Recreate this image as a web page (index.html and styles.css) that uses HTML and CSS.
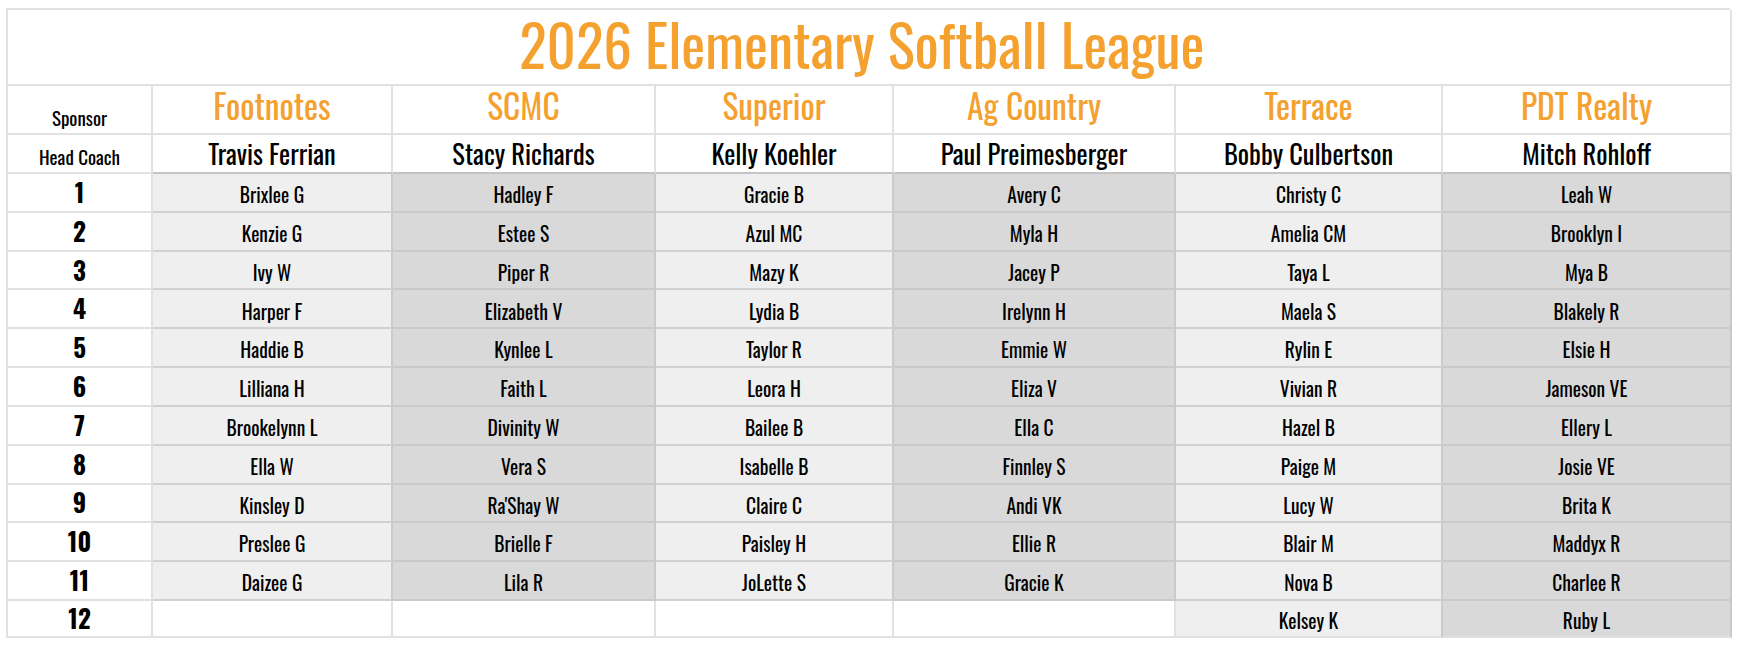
FILE: index.html
```html
<!DOCTYPE html>
<html lang="en">
<head>
<meta charset="utf-8">
<title>2026 Elementary Softball League</title>
<link rel="stylesheet" href="styles.css">
</head>
<body>
<div class="sheet">
  <div class="title"><span>2026 Elementary Softball League</span></div>

  <div class="label sponsor-label"><span>Sponsor</span></div>
  <div class="team"><span>Footnotes</span></div>
  <div class="team"><span>SCMC</span></div>
  <div class="team"><span>Superior</span></div>
  <div class="team"><span>Ag Country</span></div>
  <div class="team"><span>Terrace</span></div>
  <div class="team"><span>PDT Realty</span></div>

  <div class="label coach-label"><span>Head Coach</span></div>
  <div class="coach"><span>Travis Ferrian</span></div>
  <div class="coach"><span>Stacy Richards</span></div>
  <div class="coach"><span>Kelly Koehler</span></div>
  <div class="coach"><span>Paul Preimesberger</span></div>
  <div class="coach"><span>Bobby Culbertson</span></div>
  <div class="coach"><span>Mitch Rohloff</span></div>

  <div class="num"><span>1</span></div>
  <div class="cell light"><span>Brixlee G</span></div>
  <div class="cell dark"><span>Hadley F</span></div>
  <div class="cell light"><span>Gracie B</span></div>
  <div class="cell dark"><span>Avery C</span></div>
  <div class="cell light"><span>Christy C</span></div>
  <div class="cell dark"><span>Leah W</span></div>

  <div class="num"><span>2</span></div>
  <div class="cell light"><span>Kenzie G</span></div>
  <div class="cell dark"><span>Estee S</span></div>
  <div class="cell light"><span>Azul MC</span></div>
  <div class="cell dark"><span>Myla H</span></div>
  <div class="cell light"><span>Amelia CM</span></div>
  <div class="cell dark"><span>Brooklyn I</span></div>

  <div class="num"><span>3</span></div>
  <div class="cell light"><span>Ivy W</span></div>
  <div class="cell dark"><span>Piper R</span></div>
  <div class="cell light"><span>Mazy K</span></div>
  <div class="cell dark"><span>Jacey P</span></div>
  <div class="cell light"><span>Taya L</span></div>
  <div class="cell dark"><span>Mya B</span></div>

  <div class="num"><span>4</span></div>
  <div class="cell light"><span>Harper F</span></div>
  <div class="cell dark"><span>Elizabeth V</span></div>
  <div class="cell light"><span>Lydia B</span></div>
  <div class="cell dark"><span>Irelynn H</span></div>
  <div class="cell light"><span>Maela S</span></div>
  <div class="cell dark"><span>Blakely R</span></div>

  <div class="num"><span>5</span></div>
  <div class="cell light"><span>Haddie B</span></div>
  <div class="cell dark"><span>Kynlee L</span></div>
  <div class="cell light"><span>Taylor R</span></div>
  <div class="cell dark"><span>Emmie W</span></div>
  <div class="cell light"><span>Rylin E</span></div>
  <div class="cell dark"><span>Elsie H</span></div>

  <div class="num"><span>6</span></div>
  <div class="cell light"><span>Lilliana H</span></div>
  <div class="cell dark"><span>Faith L</span></div>
  <div class="cell light"><span>Leora H</span></div>
  <div class="cell dark"><span>Eliza V</span></div>
  <div class="cell light"><span>Vivian R</span></div>
  <div class="cell dark"><span>Jameson VE</span></div>

  <div class="num"><span>7</span></div>
  <div class="cell light"><span>Brookelynn L</span></div>
  <div class="cell dark"><span>Divinity W</span></div>
  <div class="cell light"><span>Bailee B</span></div>
  <div class="cell dark"><span>Ella C</span></div>
  <div class="cell light"><span>Hazel B</span></div>
  <div class="cell dark"><span>Ellery L</span></div>

  <div class="num"><span>8</span></div>
  <div class="cell light"><span>Ella W</span></div>
  <div class="cell dark"><span>Vera S</span></div>
  <div class="cell light"><span>Isabelle B</span></div>
  <div class="cell dark"><span>Finnley S</span></div>
  <div class="cell light"><span>Paige M</span></div>
  <div class="cell dark"><span>Josie VE</span></div>

  <div class="num"><span>9</span></div>
  <div class="cell light"><span>Kinsley D</span></div>
  <div class="cell dark"><span>Ra'Shay W</span></div>
  <div class="cell light"><span>Claire C</span></div>
  <div class="cell dark"><span>Andi VK</span></div>
  <div class="cell light"><span>Lucy W</span></div>
  <div class="cell dark"><span>Brita K</span></div>

  <div class="num"><span>10</span></div>
  <div class="cell light"><span>Preslee G</span></div>
  <div class="cell dark"><span>Brielle F</span></div>
  <div class="cell light"><span>Paisley H</span></div>
  <div class="cell dark"><span>Ellie R</span></div>
  <div class="cell light"><span>Blair M</span></div>
  <div class="cell dark"><span>Maddyx R</span></div>

  <div class="num"><span>11</span></div>
  <div class="cell light"><span>Daizee G</span></div>
  <div class="cell dark"><span>Lila R</span></div>
  <div class="cell light"><span>JoLette S</span></div>
  <div class="cell dark"><span>Gracie K</span></div>
  <div class="cell light"><span>Nova B</span></div>
  <div class="cell dark"><span>Charlee R</span></div>

  <div class="num last"><span>12</span></div>
  <div class="cell empty last"></div>
  <div class="cell empty last"></div>
  <div class="cell empty last"></div>
  <div class="cell empty last"></div>
  <div class="cell light last"><span>Kelsey K</span></div>
  <div class="cell dark last"><span>Ruby L</span></div>
</div>
</body>
</html>
```

FILE: styles.css
```css
html, body {
  background: #ffffff;
}

body {
  margin: 8px 0 0 6px;
  font-family: "Oswald", "Roboto Condensed", "Noto Sans", sans-serif;
  font-stretch: condensed;
  color: #000000;
}

.sheet {
  display: grid;
  width: 1724px;
  grid-template-columns: 145px 240px 263px 238px 282px 267px 289px;
  grid-template-rows: 76px 49px 39px repeat(11, 38.82px) 37px;
  border-left: 2px solid #e1e1e1;
  border-top: 2px solid #e1e1e1;
  box-sizing: border-box;
}

.sheet > div {
  box-sizing: border-box;
  display: flex;
  justify-content: center;
  align-items: center;
  border-right: 2px solid #e1e1e1;
  border-bottom: 2px solid #e1e1e1;
  white-space: nowrap;
  line-height: 1;
}

.title {
  grid-column: 1 / -1;
  color: #f4a130;
  font-size: 57px;
  padding-bottom: 7px;
  padding-right: 14px;
}

.team {
  color: #f4a130;
  font-size: 33.5px;
  padding-bottom: 7px;
}

.coach {
  font-size: 26.5px;
  padding-top: 0;
}

.label {
  font-size: 19px;
}

.sponsor-label {
  padding-top: 16px;
}

.coach-label {
  padding-top: 5px;
}

.num {
  font-weight: bold;
  font-size: 25px;
  padding-bottom: 2px;
}

.cell {
  font-size: 19.5px;
  padding-top: 5px;
}

.sheet > .light {
  background: #efefef;
  border-right-color: #cbcbcb;
  border-bottom-color: #d1d1d1;
}

.sheet > .dark {
  background: #d9d9d9;
  border-right-color: #c9c9c9;
  border-bottom-color: #c9c9c9;
}

.sheet > .coach {
  border-bottom: 2px solid #c4c4c4;
}

.sheet > .empty {
  background: #ffffff;
}

.sheet > .last {
  border-bottom-color: #e1e1e1;
}
```
